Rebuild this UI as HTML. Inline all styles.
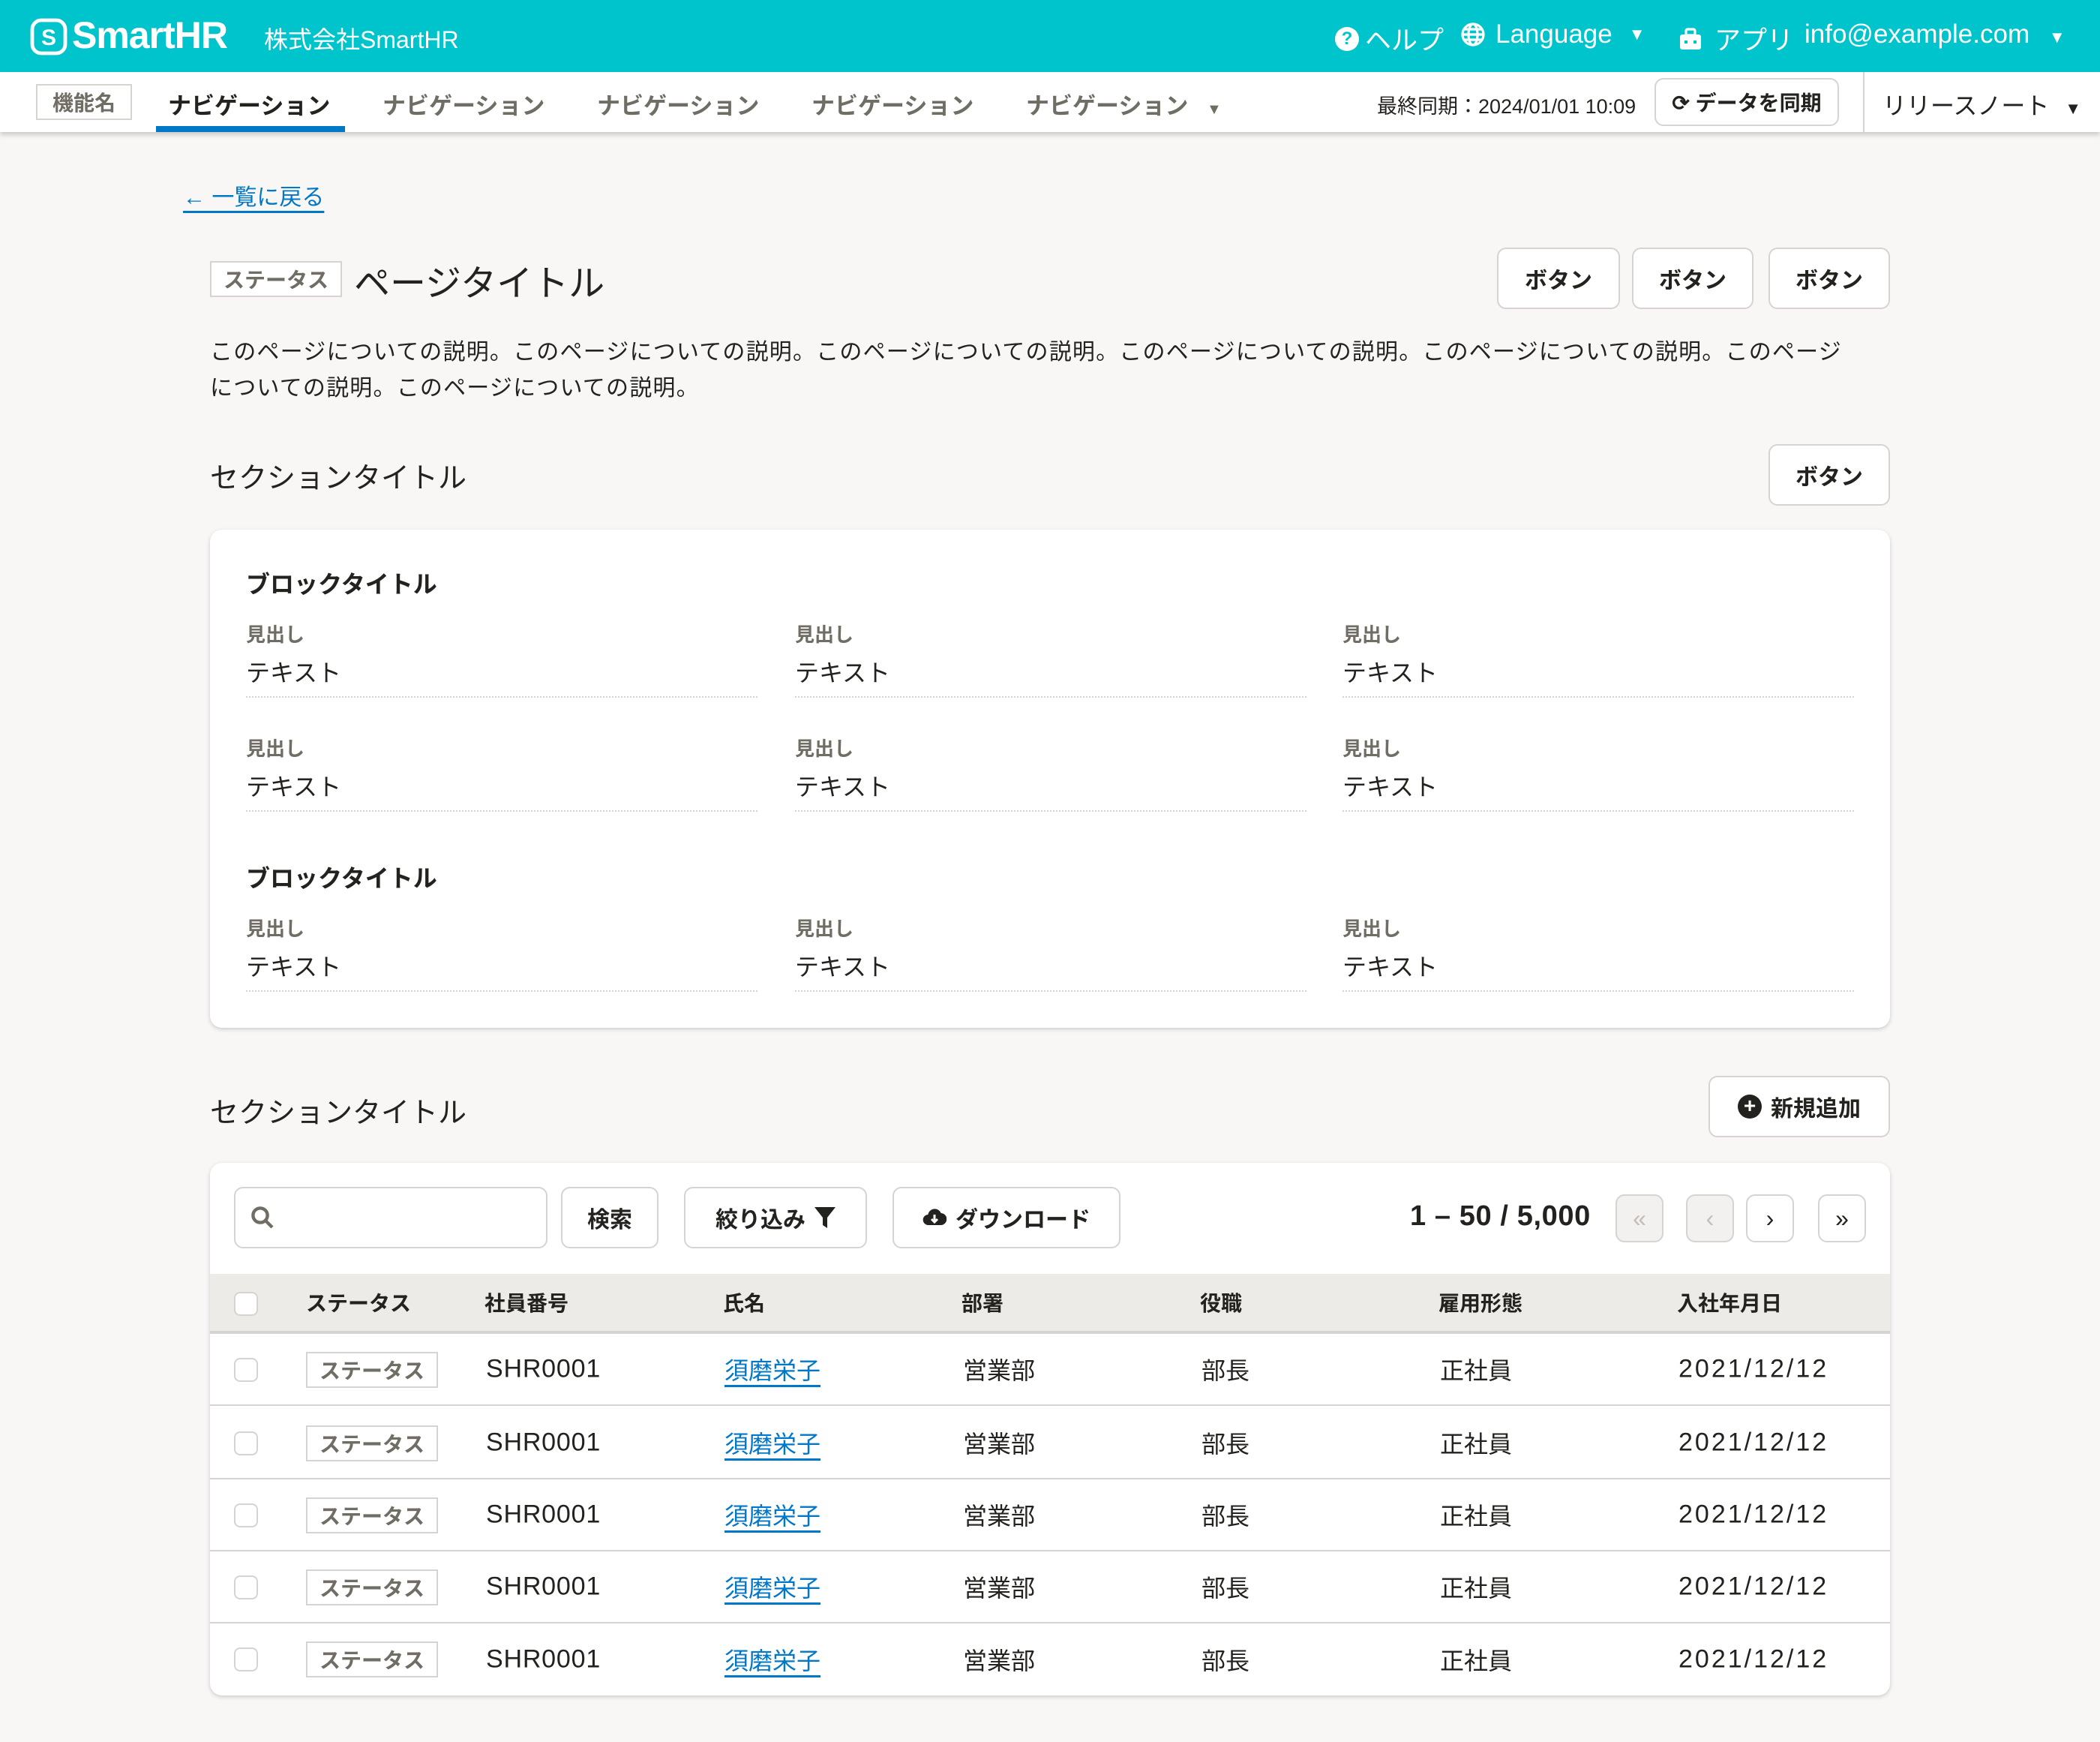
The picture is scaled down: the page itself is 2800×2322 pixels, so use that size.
<!DOCTYPE html>
<html><head><meta charset="utf-8"><style>
*{box-sizing:border-box;margin:0;padding:0}
html,body{width:2800px;height:2322px;overflow:hidden;background:#f8f7f6}
#r{zoom:2;width:1400px;height:1161px;position:relative;font-family:"Liberation Sans","Noto Sans CJK JP",sans-serif;color:#23221e}
.a{position:absolute;white-space:nowrap}
.hd{position:absolute;left:0;top:0;width:1400px;height:48px;background:#00c4cc;color:#fff}
.nv{position:absolute;left:0;top:48px;width:1400px;height:40px;background:#fff;box-shadow:0 2px 3px rgba(0,0,0,.18)}
.tag{position:absolute;border:1px solid #d6d3d0;background:#fff;color:#706d65;font-weight:bold;font-size:14px;display:flex;align-items:center;justify-content:center}
.btn{position:absolute;border:1px solid #d6d3d0;background:#fff;border-radius:6px;font-weight:bold;font-size:15px;display:flex;align-items:center;justify-content:center;gap:6px}
.card{position:absolute;background:#fff;border-radius:8px;box-shadow:0 1px 3px rgba(0,0,0,.18)}
.lab{font-size:13px;font-weight:bold;color:#706d65}
.val{font-size:16px}
.ln{position:absolute;height:1px;border-top:1px dotted #d6d3d0;width:341px}
.cb{position:absolute;width:16px;height:16px;border:1px solid #d6d3d0;border-radius:4px;background:#fff}
.row{position:absolute;left:0;width:1120px;height:48px;border-bottom:1px solid #d6d3d0}
.row .a{top:50%;transform:translateY(-50%);font-size:16px}
.row .num{font-size:17px;letter-spacing:0.4px}
.row .dt{font-size:17px;letter-spacing:1.5px}
.lnk{color:#0077c7;text-decoration:underline;text-underline-offset:4px}
.th{position:absolute;top:50%;transform:translateY(-50%);font-size:14px;font-weight:bold}
.pg{position:absolute;top:21px;width:32px;height:32px;border:1px solid #d6d3d0;border-radius:6px;background:#fff;display:flex;align-items:center;justify-content:center;font-size:16px}
.hi{font-size:17.5px;top:13px}
</style></head><body><div id="r">
<div class="hd">
 <svg class="a" style="left:20px;top:12px" width="25" height="25" viewBox="0 0 25 25"><rect x="1.5" y="1.5" width="22" height="22" rx="6" fill="none" stroke="#fff" stroke-width="2.4"/><text x="12.5" y="18" font-size="15" font-weight="bold" fill="#fff" text-anchor="middle" font-family="Liberation Sans">S</text></svg>
 <div class="a" style="left:48px;top:9px;font-size:25px;font-weight:bold;letter-spacing:-0.5px">SmartHR</div>
 <div class="a" style="left:176px;top:14px;font-size:16px">株式会社SmartHR</div>
 <div class="a hi" style="left:890px;display:flex;align-items:center;gap:4px"><span style="display:inline-block;width:16px;height:16px;border-radius:50%;background:#fff;color:#00c4cc;font-size:12px;font-weight:bold;text-align:center;line-height:16px">?</span>ヘルプ</div>
 <div class="a hi" style="left:974px;display:flex;align-items:center;gap:7px"><svg width="16" height="16" viewBox="0 0 16 16" fill="none" stroke="#fff" stroke-width="1.6"><circle cx="8" cy="8" r="7"/><ellipse cx="8" cy="8" rx="3" ry="7"/><path d="M1 8h14M2 4.5h12M2 11.5h12"/></svg>Language <span style="font-size:11px;margin-left:4px">▼</span></div>
 <div class="a hi" style="left:1119px;display:flex;align-items:center;gap:8px"><svg width="16" height="16" viewBox="0 0 16 16"><rect x="1" y="5" width="14" height="10" rx="1.5" fill="#fff"/><rect x="5" y="1.5" width="6" height="4" rx="1" fill="none" stroke="#fff" stroke-width="1.6"/><rect x="4" y="9" width="2" height="2" fill="#00c4cc"/><rect x="10" y="9" width="2" height="2" fill="#00c4cc"/></svg>アプリ</div>
 <div class="a hi" style="left:1203px">info@example.com <span style="font-size:11px;margin-left:8px">▼</span></div>
</div>
<div class="nv">
 <div class="tag" style="left:24px;top:8px;width:64px;height:24px">機能名</div>
 <div class="a" style="left:112px;top:10px;font-size:15.5px;font-weight:bold">ナビゲーション</div>
 <div class="a" style="left:104px;top:36px;width:126px;height:4px;background:#0077c7"></div>
 <div class="a" style="left:255px;top:10px;font-size:15.5px;font-weight:bold;color:#706d65">ナビゲーション</div>
 <div class="a" style="left:398px;top:10px;font-size:15.5px;font-weight:bold;color:#706d65">ナビゲーション</div>
 <div class="a" style="left:541px;top:10px;font-size:15.5px;font-weight:bold;color:#706d65">ナビゲーション</div>
 <div class="a" style="left:684px;top:10px;font-size:15.5px;font-weight:bold;color:#706d65">ナビゲーション <span style="font-size:10px;margin-left:8px">▼</span></div>
 <div class="a" style="left:918px;top:12px;font-size:13.5px">最終同期：2024/01/01 10:09</div>
 <div class="btn" style="left:1103px;top:4px;width:123px;height:32px;font-size:14px">⟳ データを同期</div>
 <div class="a" style="left:1242px;top:0;width:1px;height:40px;background:#d6d3d0"></div>
 <div class="a" style="left:1255px;top:10px;font-size:16px">リリースノート <span style="font-size:11px;margin-left:6px">▼</span></div>
</div>

<div class="a lnk" style="left:122px;top:119px;font-size:15px"><b>←</b> 一覧に戻る</div>
<div class="tag" style="left:140px;top:174px;width:88px;height:24px">ステータス</div>
<div class="a" style="left:236px;top:169px;font-size:24px">ページタイトル</div>
<div class="btn" style="left:998px;top:165px;width:82px;height:41px">ボタン</div>
<div class="btn" style="left:1088px;top:165px;width:81px;height:41px">ボタン</div>
<div class="btn" style="left:1179px;top:165px;width:81px;height:41px">ボタン</div>
<div class="a" style="left:140px;top:223px;width:1098px;white-space:normal;font-size:15px;letter-spacing:0.6px;line-height:24px">このページについての説明。このページについての説明。このページについての説明。このページについての説明。このページについての説明。このページについての説明。このページについての説明。</div>
<div class="a" style="left:140px;top:303px;font-size:19px">セクションタイトル</div>
<div class="btn" style="left:1179px;top:296px;width:81px;height:41px">ボタン</div>

<div class="card" style="left:140px;top:353px;width:1120px;height:332px">
 <div class="a" style="left:24px;top:24px;font-size:16px;font-weight:bold">ブロックタイトル</div>
 <div class="a lab" style="left:24px;top:60px">見出し</div><div class="a val" style="left:24px;top:83px">テキスト</div><div class="ln" style="left:24px;top:111px"></div>
 <div class="a lab" style="left:390px;top:60px">見出し</div><div class="a val" style="left:390px;top:83px">テキスト</div><div class="ln" style="left:390px;top:111px"></div>
 <div class="a lab" style="left:755px;top:60px">見出し</div><div class="a val" style="left:755px;top:83px">テキスト</div><div class="ln" style="left:755px;top:111px"></div>
 <div class="a lab" style="left:24px;top:136px">見出し</div><div class="a val" style="left:24px;top:159px">テキスト</div><div class="ln" style="left:24px;top:187px"></div>
 <div class="a lab" style="left:390px;top:136px">見出し</div><div class="a val" style="left:390px;top:159px">テキスト</div><div class="ln" style="left:390px;top:187px"></div>
 <div class="a lab" style="left:755px;top:136px">見出し</div><div class="a val" style="left:755px;top:159px">テキスト</div><div class="ln" style="left:755px;top:187px"></div>
 <div class="a" style="left:24px;top:220px;font-size:16px;font-weight:bold">ブロックタイトル</div>
 <div class="a lab" style="left:24px;top:256px">見出し</div><div class="a val" style="left:24px;top:279px">テキスト</div><div class="ln" style="left:24px;top:307px"></div>
 <div class="a lab" style="left:390px;top:256px">見出し</div><div class="a val" style="left:390px;top:279px">テキスト</div><div class="ln" style="left:390px;top:307px"></div>
 <div class="a lab" style="left:755px;top:256px">見出し</div><div class="a val" style="left:755px;top:279px">テキスト</div><div class="ln" style="left:755px;top:307px"></div>
</div>

<div class="a" style="left:140px;top:726px;font-size:19px">セクションタイトル</div>
<div class="btn" style="left:1139px;top:717px;width:121px;height:41px"><span style="display:inline-block;width:16px;height:16px;border-radius:50%;background:#23221e;color:#fff;font-size:14px;line-height:15px;text-align:center">+</span>新規追加</div>

<div class="card" style="left:140px;top:775px;width:1120px;height:355px;overflow:hidden">
 <div class="btn" style="left:16px;top:16px;width:209px;height:41px;justify-content:flex-start;padding-left:10px"><svg width="16" height="16" viewBox="0 0 16 16" fill="none" stroke="#706d65" stroke-width="2.2"><circle cx="6.5" cy="6.5" r="4.8"/><path d="M10 10l4.5 4.5"/></svg></div>
 <div class="btn" style="left:234px;top:16px;width:65px;height:41px">検索</div>
 <div class="btn" style="left:316px;top:16px;width:122px;height:41px">絞り込み <svg width="14" height="14" viewBox="0 0 14 14"><path d="M0 0h14L8.5 7v7L5.5 12V7z" fill="#23221e"/></svg></div>
 <div class="btn" style="left:455px;top:16px;width:152px;height:41px"><svg width="16" height="14" viewBox="0 0 16 14"><path d="M4 12a3.5 3.5 0 0 1-.3-7A4.5 4.5 0 0 1 12.3 4 3.5 3.5 0 0 1 12 12z" fill="#23221e"/><path d="M8 5v5M6 8l2 2 2-2" stroke="#fff" stroke-width="1.5" fill="none"/></svg> ダウンロード</div>
 <div class="a" style="left:800px;top:25px;font-size:19px;letter-spacing:0.3px;font-weight:bold">1 – 50 / 5,000</div>
 <div class="pg" style="left:937px;background:#f2f1f0;color:#c1bdb7">«</div>
 <div class="pg" style="left:984px;background:#f2f1f0;color:#c1bdb7">‹</div>
 <div class="pg" style="left:1024px">›</div>
 <div class="pg" style="left:1072px">»</div>
 <div class="a" style="left:0;top:74px;width:1120px;height:40px;background:#edebe8;border-bottom:2px solid #d6d3d0">
  <div class="cb" style="left:16px;top:12px"></div>
  <div class="th" style="left:64px">ステータス</div><div class="th" style="left:183px">社員番号</div><div class="th" style="left:342px">氏名</div><div class="th" style="left:501px">部署</div><div class="th" style="left:660px">役職</div><div class="th" style="left:819px">雇用形態</div><div class="th" style="left:978px">入社年月日</div>
 </div>
 <div class="row" style="top:114px"><div class="cb" style="left:16px;top:16px"></div><div class="tag" style="left:64px;top:12px;width:88px;height:24px">ステータス</div><div class="a num" style="left:184px">SHR0001</div><div class="a lnk" style="left:343px">須磨栄子</div><div class="a" style="left:502px">営業部</div><div class="a" style="left:661px">部長</div><div class="a" style="left:820px">正社員</div><div class="a dt" style="left:979px">2021/12/12</div></div>
 <div class="row" style="top:163px"><div class="cb" style="left:16px;top:16px"></div><div class="tag" style="left:64px;top:12px;width:88px;height:24px">ステータス</div><div class="a num" style="left:184px">SHR0001</div><div class="a lnk" style="left:343px">須磨栄子</div><div class="a" style="left:502px">営業部</div><div class="a" style="left:661px">部長</div><div class="a" style="left:820px">正社員</div><div class="a dt" style="left:979px">2021/12/12</div></div>
 <div class="row" style="top:211px"><div class="cb" style="left:16px;top:16px"></div><div class="tag" style="left:64px;top:12px;width:88px;height:24px">ステータス</div><div class="a num" style="left:184px">SHR0001</div><div class="a lnk" style="left:343px">須磨栄子</div><div class="a" style="left:502px">営業部</div><div class="a" style="left:661px">部長</div><div class="a" style="left:820px">正社員</div><div class="a dt" style="left:979px">2021/12/12</div></div>
 <div class="row" style="top:259px"><div class="cb" style="left:16px;top:16px"></div><div class="tag" style="left:64px;top:12px;width:88px;height:24px">ステータス</div><div class="a num" style="left:184px">SHR0001</div><div class="a lnk" style="left:343px">須磨栄子</div><div class="a" style="left:502px">営業部</div><div class="a" style="left:661px">部長</div><div class="a" style="left:820px">正社員</div><div class="a dt" style="left:979px">2021/12/12</div></div>
 <div class="row" style="top:307px;border-bottom:none"><div class="cb" style="left:16px;top:16px"></div><div class="tag" style="left:64px;top:12px;width:88px;height:24px">ステータス</div><div class="a num" style="left:184px">SHR0001</div><div class="a lnk" style="left:343px">須磨栄子</div><div class="a" style="left:502px">営業部</div><div class="a" style="left:661px">部長</div><div class="a" style="left:820px">正社員</div><div class="a dt" style="left:979px">2021/12/12</div></div>
</div>
</div></body></html>
